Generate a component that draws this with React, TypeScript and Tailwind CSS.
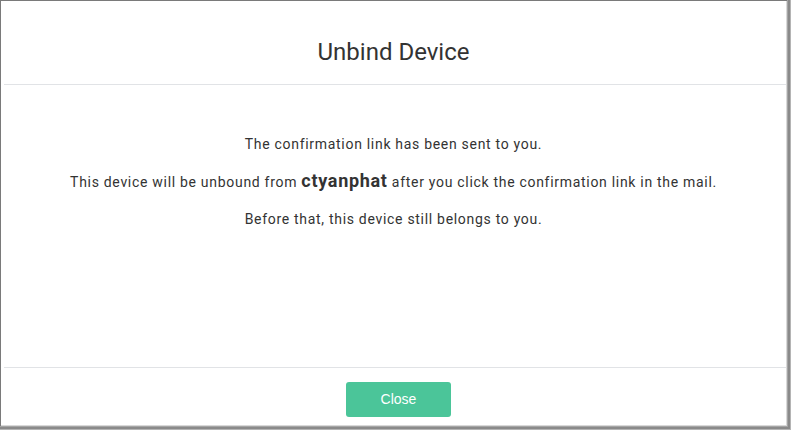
import React from "react";

const App = () => {
  return (
    <div className="w-[791px] h-[430px] bg-[#b4b4b4] pr-px pb-px">
      <div className="w-full h-full bg-[#8a8a8a] pr-[2px] pb-[2px]">
        <div className="w-full h-full bg-[#a5a5a5] pr-px pb-px">
          <div className="w-full h-full bg-[#d9d9d9] pr-px pb-px border-l border-t border-[#7a7a7a]">
            <div
              className="w-full h-full bg-white flex flex-col text-[#333333]"
              style={{ fontFamily: "Roboto, 'Liberation Sans', sans-serif" }}
            >
              <div className="h-[83px] flex items-center justify-center pt-[18px]">
                <h1 className="text-[24px] font-normal text-[#333]">Unbind Device</h1>
              </div>
              <div className="ml-[3px] h-px bg-[#e1e3e6]" />
              <div className="flex-1 flex flex-col items-center pt-[49px] gap-[15px] text-[14px] tracking-[0.7px] text-[#333] leading-[20px]">
                <p>The confirmation link has been sent to you.</p>
                <p className="leading-[23px]">
                  This device will be unbound from{" "}
                  <span className="text-[18px] font-bold tracking-[0.7px]">ctyanphat</span> after you
                  click the confirmation link in the mail.
                </p>
                <p>Before that, this device still belongs to you.</p>
              </div>
              <div className="ml-[3px] h-px bg-[#e1e3e6]" />
              <div className="h-[57px] flex items-start justify-center pt-[14px] pl-[10px]">
                <button
                  className="w-[105px] h-[35px] rounded-[3px] bg-[#4bc599] text-white text-[14px]"
                  style={{ fontFamily: "'Liberation Sans', Arial, sans-serif" }}
                >
                  Close
                </button>
              </div>
            </div>
          </div>
        </div>
      </div>
    </div>
  );
};

export default App;
